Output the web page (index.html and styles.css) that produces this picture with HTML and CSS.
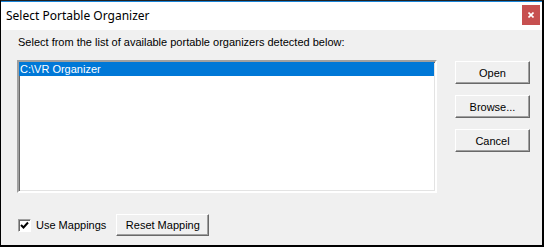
FILE: index.html
```html
<!DOCTYPE html>
<html lang="en">
<head>
    <meta charset="UTF-8">
    <title>Select Portable Organizer</title>
    <link rel="stylesheet" href="styles.css">
</head>
<body>
    <div class="window">
        <div class="titlebar">
            <span class="title">Select Portable Organizer</span>
            <span class="close">
                <svg width="6" height="6" viewBox="0 0 6 6">
                    <path d="M0.5 0.5 L5.5 5.5 M5.5 0.5 L0.5 5.5" stroke="#fff" stroke-width="1.6"/>
                </svg>
            </span>
        </div>
        <div class="content">
            <div class="label">Select from the list of available portable organizers detected below:</div>
            <div class="main-row">
                <div class="listbox">
                    <div class="item selected">C:\VR Organizer</div>
                </div>
                <div class="buttons">
                    <button class="btn">Open</button>
                    <button class="btn">Browse...</button>
                    <button class="btn">Cancel</button>
                </div>
            </div>
            <div class="bottom-row">
                <label class="check">
                    <span class="box">
                        <svg width="9" height="9" viewBox="0 0 9 9">
                            <path d="M1 4 L3.5 6.5 L8 1.5" stroke="#000" stroke-width="2" fill="none"/>
                        </svg>
                    </span>
                    Use Mappings
                </label>
                <button class="btn reset">Reset Mapping</button>
            </div>
        </div>
    </div>
</body>
</html>
```

FILE: styles.css
```css
body {
    margin: 0;
    font-family: "Liberation Sans", Arial, sans-serif;
    font-size: 11px;
    background-color: #000000;
}

.window {
    width: 544px;
    height: 247px;
    box-sizing: border-box;
    border-left: 1px solid #000;
    border-right: 2px solid #000;
    border-bottom: 2px solid #000;
    border-top: 1px solid #222;
    background-color: #F0F0F0;
    display: flex;
    flex-direction: column;
}

.titlebar {
    height: 29px;
    box-sizing: border-box;
    border-top: 1px solid #1883D7;
    background-color: #FFFFFF;
    display: flex;
    align-items: flex-start;
    justify-content: space-between;
}

.title {
    font-family: "Noto Sans", sans-serif;
    font-size: 12px;
    color: #000;
    padding-left: 5px;
    margin-top: 5px;
}

.close {
    width: 18px;
    height: 20px;
    margin-top: 3px;
    margin-right: 2px;
    background-color: #C75050;
    display: flex;
    align-items: center;
    justify-content: center;
}

.content {
    padding-left: 16px;
}

.label {
    margin-top: 6px;
    margin-left: 1px;
    line-height: 13px;
    color: #000;
}

.main-row {
    display: flex;
    margin-top: 11px;
}

.listbox {
    width: 420px;
    height: 133px;
    box-sizing: border-box;
    border: 2px solid;
    border-color: #A0A0A0 #FFFFFF #FFFFFF #A0A0A0;
    box-shadow: inset 1px 1px 0 #696969, inset -1px -1px 0 #E3E3E3;
    background-color: #FFFFFF;
    padding: 0 1px 0 0;
}

.item {
    height: 14px;
    line-height: 14px;
    padding-left: 1px;
    color: #000;
}

.item.selected {
    background-color: #0078D7;
    color: #FFFFFF;
}

.buttons {
    display: flex;
    flex-direction: column;
    gap: 11px;
    margin-left: 18px;
    margin-top: 1px;
}

.btn {
    width: 75px;
    height: 23px;
    box-sizing: border-box;
    font-family: "Liberation Sans", Arial, sans-serif;
    font-size: 11px;
    color: #000;
    background-color: #F0F0F0;
    border: 1px solid;
    border-color: #FFFFFF #696969 #696969 #FFFFFF;
    box-shadow: inset -1px -1px 0 #A0A0A0;
    padding: 0;
    margin: 0;
}

.bottom-row {
    display: flex;
    align-items: center;
    margin-top: 21px;
}

.check {
    display: flex;
    align-items: center;
    color: #000;
    gap: 5px;
    margin-left: 1px;
}

.box {
    width: 13px;
    height: 13px;
    box-sizing: border-box;
    border: 1px solid;
    border-color: #A0A0A0 #FFFFFF #FFFFFF #A0A0A0;
    box-shadow: inset 1px 1px 0 #696969;
    background-color: #FFFFFF;
    display: flex;
    align-items: center;
    justify-content: center;
}

.btn.reset {
    width: 93px;
    height: 22px;
    margin-left: 10px;
}
```
